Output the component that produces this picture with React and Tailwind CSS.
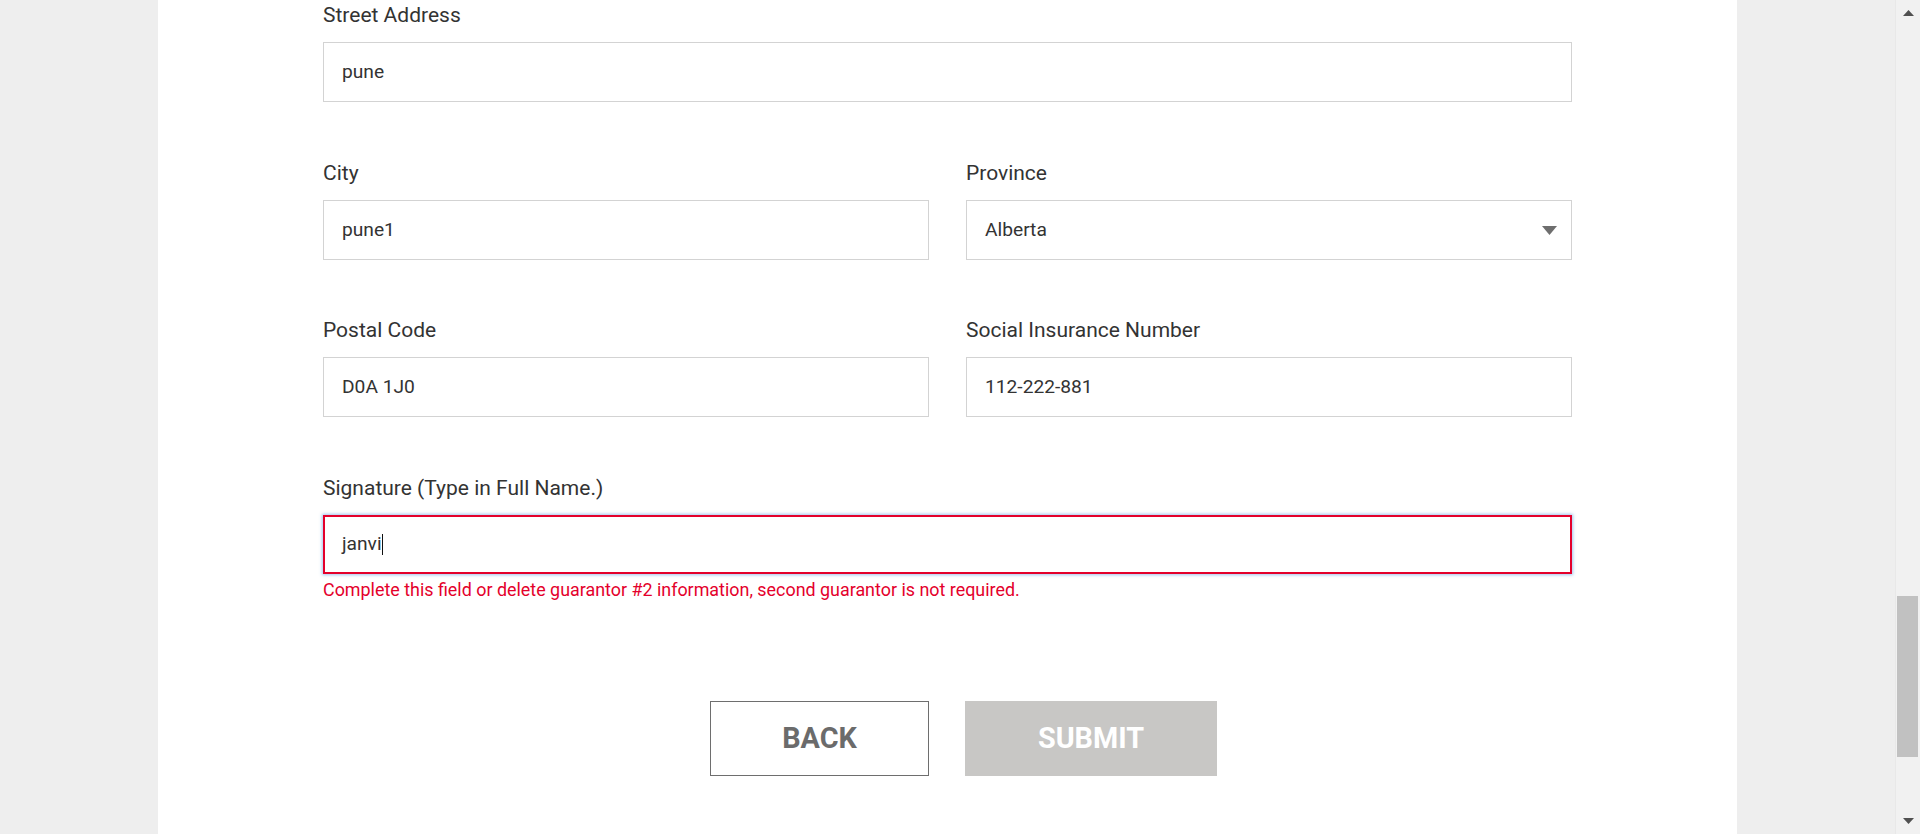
import React from 'react';

const font = { fontFamily: 'Roboto, "Liberation Sans", sans-serif' };

function Label({ children }) {
  return <div className="text-[21px] leading-[26px] text-[#333333] mb-[14px]">{children}</div>;
}

function TextBox({ value }) {
  return (
    <div className="h-[60px] border border-[#d3d3d3] bg-white flex items-center pl-[18px] text-[19.2px] text-[#333333]">
      {value}
    </div>
  );
}

function Field({ label, value, className = '' }) {
  return (
    <div className={className}>
      <Label>{label}</Label>
      <TextBox value={value} />
    </div>
  );
}

function SelectBox({ value }) {
  return (
    <div className="h-[60px] border border-[#d3d3d3] bg-white flex items-center justify-between pl-[18px] pr-[14px] text-[19.2px] text-[#333333]">
      <span>{value}</span>
      <svg width="15" height="9" viewBox="0 0 15 9">
        <polygon points="0,0 15,0 7.5,9" fill="#6e6e6e" />
      </svg>
    </div>
  );
}

function ScrollArrow({ up }) {
  return (
    <div className="h-[26px] flex items-center justify-center pl-[1px]">
      <svg width="11" height="6" viewBox="0 0 11 6">
        <polygon points={up ? '5.5,0 11,6 0,6' : '0,0 11,0 5.5,6'} fill="#505050" />
      </svg>
    </div>
  );
}

export default function App() {
  return (
    <div className="flex h-[834px] overflow-hidden bg-[#eeeeee]" style={font}>
      <div className="flex-1 flex justify-center">
        <div className="w-[1579px] bg-white px-[165px] pt-[2px]">
          <Field label="Street Address" value="pune" className="mb-[58px]" />

          <div className="grid grid-cols-2 gap-x-[37px] mb-[57px]">
            <Field label="City" value="pune1" />
            <div>
              <Label>Province</Label>
              <SelectBox value="Alberta" />
            </div>
          </div>

          <div className="grid grid-cols-2 gap-x-[37px] mb-[58px]">
            <Field label="Postal Code" value="D0A 1J0" />
            <Field label="Social Insurance Number" value="112-222-881" />
          </div>

          <div>
            <Label>Signature (Type in Full Name.)</Label>
            <div className="h-[59px] border-2 border-[#e4002b] shadow-[0_0_3px_1px_rgba(120,170,230,0.7)] bg-white flex items-center pl-[17px] text-[19.2px] text-[#333333]">
              <span>janvi</span>
              <span className="inline-block w-[1px] h-[21px] bg-[#111111]"></span>
            </div>
            <div className="mt-[5px] text-[17.9px] leading-[21px] text-[#e4002b]">
              Complete this field or delete guarantor #2 information, second guarantor is not required.
            </div>
          </div>

          <div className="mt-[101px] flex justify-center gap-[36px] pl-[32px]">
            <button className="w-[219px] h-[75px] border border-[#6e6e6e] bg-white text-[28.8px] font-bold text-[#6b6b6b]">
              BACK
            </button>
            <button className="w-[252px] h-[75px] bg-[#c8c7c5] text-[28.8px] font-bold text-white">
              SUBMIT
            </button>
          </div>
        </div>
      </div>

      <div className="w-[25px] bg-[#f1f1f1] border-l border-[#e8e8e8] flex flex-col">
        <ScrollArrow up />
        <div className="flex-1 pt-[570px] pl-[1px]">
          <div className="w-[21px] h-[161px] bg-[#c1c1c1]"></div>
        </div>
        <ScrollArrow />
      </div>
    </div>
  );
}
